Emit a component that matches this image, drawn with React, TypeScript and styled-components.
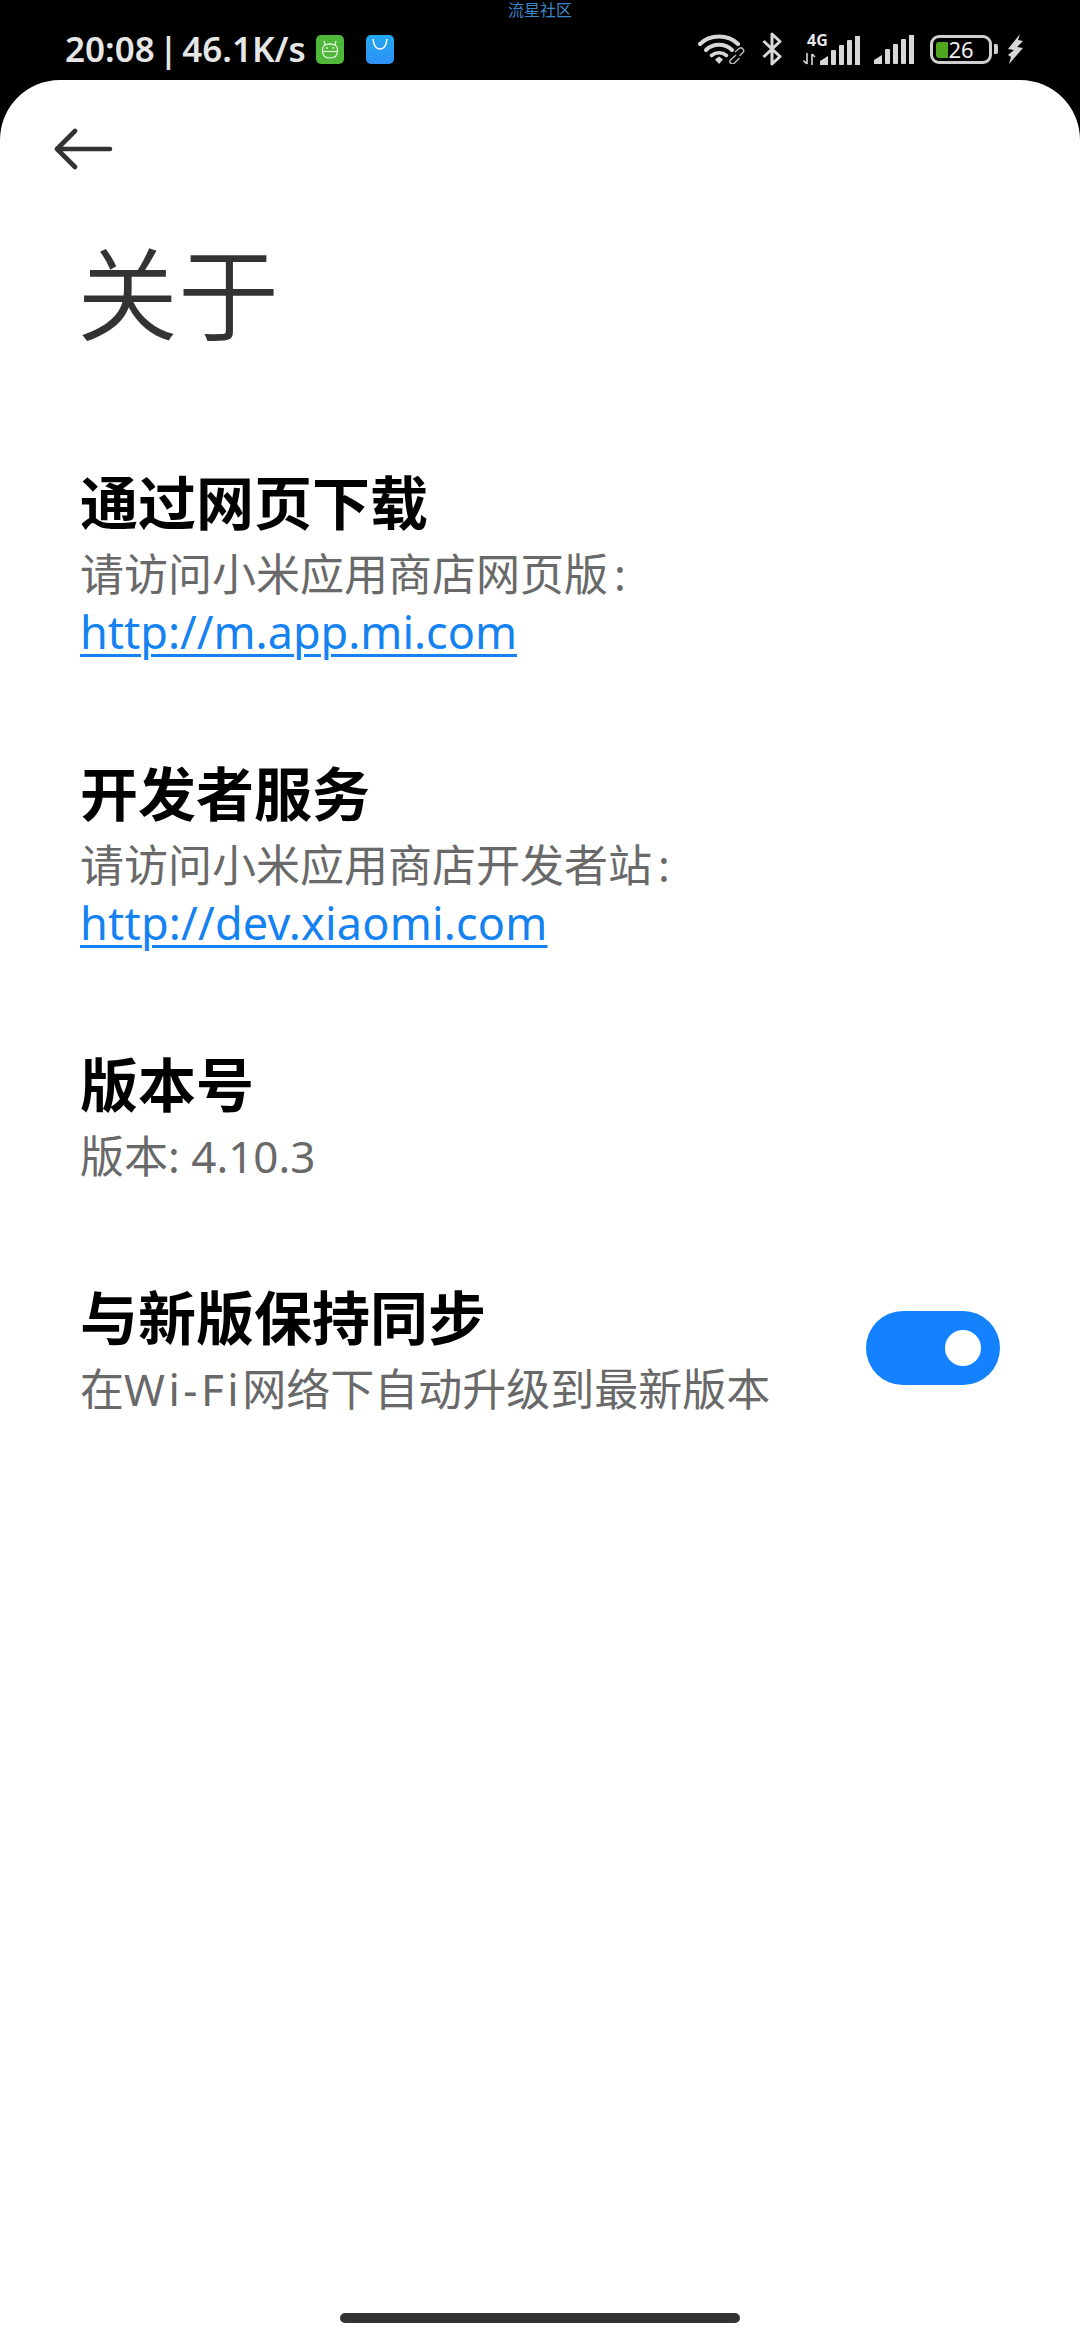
import styled, { createGlobalStyle } from 'styled-components';

const GlobalStyle = createGlobalStyle`
  html, body {
    margin: 0;
    padding: 0;
    background: #000;
  }
  body {
    font-family: "Noto Sans", "Noto Sans CJK SC", sans-serif;
  }
`;

const WifiIcon = () => (
  <svg width="47" height="30" viewBox="0 0 47 30" fill="none" style={{ display: 'block' }}>
    <path d="M2 10 C12 0 30 0 40 10" stroke="#d8d8d8" strokeWidth="4" strokeLinecap="round" />
    <path d="M8 16 C15 9 27 9 34 16" stroke="#d8d8d8" strokeWidth="4" strokeLinecap="round" />
    <path d="M13.5 21.5 C18 18 24 18 28.5 21.5" stroke="#d8d8d8" strokeWidth="3.6" strokeLinecap="round" />
    <path d="M17 25.5 L21 22.5 L25 25.5 L21 30 Z" fill="#d8d8d8" />
    <path d="M37 18 L41 14.5 Q43 13 45 15 Q46.5 17 45 18.5 L41.5 22" stroke="#b4b4b4" strokeWidth="1.5" />
    <path d="M38 21 L32.5 26 Q31 28 33 29.5 Q35 30.5 36.5 29 L41.5 24" stroke="#b4b4b4" strokeWidth="1.5" />
  </svg>
);

const BluetoothIcon = () => (
  <svg width="20" height="34" viewBox="0 0 20 34" fill="none" style={{ display: 'block' }}>
    <path d="M1.5 9 L18 24.5 L10 32 V2 L18 9.5 L1.5 25" stroke="#d8d8d8" strokeWidth="3" strokeLinejoin="round" />
  </svg>
);

const SignalIcon = () => (
  <svg width="40" height="29" viewBox="0 0 40 29" style={{ display: 'block' }}>
    <path d="M0 29 V25 L8 20 V29 Z" fill="#d8d8d8" />
    <rect x="11" y="14" width="5" height="15" rx="1" fill="#d8d8d8" />
    <rect x="19" y="9" width="5" height="20" rx="1" fill="#d8d8d8" />
    <rect x="27" y="4" width="5" height="25" rx="1" fill="#d8d8d8" />
    <rect x="35" y="0" width="5" height="29" fill="#d8d8d8" />
  </svg>
);

const ArrowsIcon = () => (
  <svg width="13" height="12" viewBox="0 0 13 12" fill="none" stroke="#d8d8d8" strokeWidth="1.6" style={{ display: 'block' }}>
    <path d="M4 0 V11 M0.5 7.5 L4 11" />
    <path d="M9 12 V1 M9 1 L12 4" />
  </svg>
);

const BoltIcon = () => (
  <svg width="17" height="30" viewBox="0 0 17 30" style={{ display: 'block' }}>
    <path d="M13 0 L1 15 L7 16 L1 21 L4 23 L2 30 L16 14 L10 13 L16 7 L11 6 Z" fill="#d8d8d8" />
  </svg>
);

const RobotIcon = () => (
  <svg width="28" height="29" viewBox="0 0 28 29" style={{ display: 'block' }}>
    <rect width="28" height="29" rx="5" fill="#4fb73a" />
    <g fill="none" stroke="#e6f5e0" strokeWidth="1.2">
      <path d="M8 6 L9 10 Q14 8 19 10 L20 6" />
      <path d="M6.5 15 Q6.5 9 14 9 Q21.5 9 21.5 15 V16 Q21.5 23 14 23 Q6.5 23 6.5 16 Z" />
      <path d="M6.5 16.5 H21.5" />
    </g>
    <circle cx="11" cy="13" r="0.9" fill="#e6f5e0" />
    <circle cx="17" cy="13" r="0.9" fill="#e6f5e0" />
  </svg>
);

const StoreIcon = () => (
  <svg width="28" height="29" viewBox="0 0 28 29" style={{ display: 'block' }}>
    <defs>
      <linearGradient id="store" x1="0" y1="0" x2="0" y2="1">
        <stop offset="0" stopColor="#22a8f2" />
        <stop offset="1" stopColor="#2f90f6" />
      </linearGradient>
    </defs>
    <rect width="28" height="29" rx="5" fill="url(#store)" />
    <path d="M7 4 Q8 14 14 14 Q20 14 21 4" fill="none" stroke="#fff" strokeWidth="1.5" />
  </svg>
);

const BackIcon = () => (
  <svg width="60" height="42" viewBox="0 0 60 42" fill="none" style={{ display: 'block' }}>
    <path d="M57 21 H4 M22 3 L4 21 L22 39" stroke="#333" strokeWidth="4.6" strokeLinecap="round" strokeLinejoin="round" />
  </svg>
);

export default function App() {
  return (
    <>
      <GlobalStyle />
      <Screen>
        <Watermark>流星社区</Watermark>
        <StatusBar>
          <StatusLeft>
            <Clock>20:08 | 46.1K/s</Clock>
            <AppIcons>
              <RobotIcon />
              <StoreIcon />
            </AppIcons>
          </StatusLeft>
          <StatusRight>
            <StatusItem><WifiIcon /></StatusItem>
            <StatusItem $gap={17}><BluetoothIcon /></StatusItem>
            <StatusItem $gap={21}>
              <Network>
                <NetworkLabels>
                  <NetworkType>4G</NetworkType>
                  <ArrowsIcon />
                </NetworkLabels>
                <SignalIcon />
              </Network>
            </StatusItem>
            <StatusItem $gap={14}><SignalIcon /></StatusItem>
            <StatusItem $gap={16}>
              <Battery>
                <BatteryShell>
                  <BatteryFill />
                  <BatteryLevel>26</BatteryLevel>
                </BatteryShell>
                <BatteryCap />
              </Battery>
            </StatusItem>
            <StatusItem $gap={9}><BoltIcon /></StatusItem>
          </StatusRight>
        </StatusBar>
        <Sheet>
          <BackButton>
            <BackIcon />
          </BackButton>
          <Title>关于</Title>
          <Sections>
            <Section>
              <Heading>通过网页下载</Heading>
              <Description>请访问小米应用商店网页版<Colon>:</Colon></Description>
              <Link>http://m.app.mi.com</Link>
            </Section>
            <Section>
              <Heading>开发者服务</Heading>
              <Description>请访问小米应用商店开发者站<Colon>:</Colon></Description>
              <Link $wide>http://dev.xiaomi.com</Link>
            </Section>
            <Section>
              <Heading>版本号</Heading>
              <Description>版本: 4.10.3</Description>
            </Section>
            <ToggleRow>
              <Section>
                <Heading>与新版保持同步</Heading>
                <Description>在<Latin>Wi-Fi</Latin>网络下自动升级到最新版本</Description>
              </Section>
              <Toggle>
                <ToggleKnob />
              </Toggle>
            </ToggleRow>
          </Sections>
          <HomeBar />
        </Sheet>
      </Screen>
    </>
  );
}

const Screen = styled.div`
  position: relative;
  display: flex;
  flex-direction: column;
  width: 1080px;
  height: 2340px;
  overflow: hidden;
  background: #000;
`;
const Watermark = styled.div`
  position: absolute;
  top: 0;
  left: 0;
  right: 0;
  text-align: center;
  font-size: 16px;
  line-height: 20px;
  color: #3d85c6;
`;
const StatusBar = styled.div`
  display: flex;
  justify-content: space-between;
  align-items: center;
  height: 80px;
  padding: 18px 56px 0 65px;
  box-sizing: border-box;
`;
const StatusLeft = styled.div`
  display: flex;
  align-items: center;
  gap: 10px;
`;
const Clock = styled.div`
  font-size: 35px;
  font-weight: 600;
  line-height: 44px;
  word-spacing: -5px;
  color: #e6e6e6;
`;
const AppIcons = styled.div`
  display: flex;
  gap: 22px;
`;
const StatusRight = styled.div`
  display: flex;
  align-items: center;
`;
const StatusItem = styled.div<{ $gap?: number }>`
  margin-left: ${(p) => p.$gap ?? 0}px;
`;
const Network = styled.div`
  display: flex;
  align-items: flex-end;
`;
const NetworkLabels = styled.div`
  display: flex;
  flex-direction: column;
  justify-content: space-between;
  width: 17px;
  height: 31px;
`;
const NetworkType = styled.div`
  margin-left: 4px;
  font-size: 16px;
  font-weight: 700;
  line-height: 13px;
  color: #e6e6e6;
`;
const Battery = styled.div`
  display: flex;
  align-items: center;
  gap: 2px;
`;
const BatteryShell = styled.div`
  position: relative;
  display: flex;
  align-items: center;
  justify-content: center;
  width: 62px;
  height: 29px;
  box-sizing: border-box;
  border: 3.5px solid #cfcfcf;
  border-radius: 9px;
`;
const BatteryFill = styled.div`
  position: absolute;
  left: 3px;
  top: 4px;
  bottom: 3px;
  width: 12px;
  border-radius: 3px 0 0 3px;
  background: #4fa61e;
`;
const BatteryLevel = styled.span`
  position: relative;
  font-size: 22px;
  line-height: 22px;
  color: #f0f0f0;
`;
const BatteryCap = styled.div`
  width: 4px;
  height: 10px;
  border-radius: 0 2px 2px 0;
  background: #cfcfcf;
`;
const Sheet = styled.div`
  position: relative;
  flex: 1;
  display: flex;
  flex-direction: column;
  background: #fff;
  border-radius: 60px 60px 0 0;
  padding: 48px 80px 0;
`;
const BackButton = styled.div`
  display: flex;
  margin-left: -27px;
  height: 42px;
`;
const Title = styled.h1`
  margin: 59px 0 0 -3px;
  font-size: 101px;
  font-weight: 350;
  line-height: 130px;
  color: #333;
`;
const Sections = styled.div`
  display: flex;
  flex-direction: column;
  gap: 98px;
  margin-top: 109px;
`;
const Section = styled.div`
  display: flex;
  flex-direction: column;
`;
const Heading = styled.div`
  font-size: 58px;
  font-weight: 700;
  line-height: 70px;
  margin-bottom: 7px;
  color: #000;
`;
const Description = styled.div`
  font-size: 44px;
  line-height: 58px;
  color: #696969;
`;
const Colon = styled.span`
  margin-left: 6px;
`;
const Latin = styled.span`
  letter-spacing: 3.5px;
`;
const Link = styled.a<{ $wide?: boolean }>`
  font-size: 45px;
  line-height: 58px;
  letter-spacing: ${(p) => (p.$wide ? '0.2px' : '0')};
  color: #1482f0;
  text-decoration: underline;
  text-decoration-thickness: 3px;
  text-underline-offset: 5px;
`;
const ToggleRow = styled.div`
  display: flex;
  align-items: flex-start;
  justify-content: space-between;
`;
const Toggle = styled.div`
  display: flex;
  align-items: center;
  justify-content: flex-end;
  width: 134px;
  height: 74px;
  margin-top: 28px;
  padding-right: 19px;
  box-sizing: border-box;
  border-radius: 37px;
  background: #1482ff;
`;
const ToggleKnob = styled.div`
  width: 36px;
  height: 36px;
  border-radius: 50%;
  background: #fff;
`;
const HomeBar = styled.div`
  position: absolute;
  left: 340px;
  bottom: 17px;
  width: 400px;
  height: 10px;
  border-radius: 5px;
  background: #333;
`;
